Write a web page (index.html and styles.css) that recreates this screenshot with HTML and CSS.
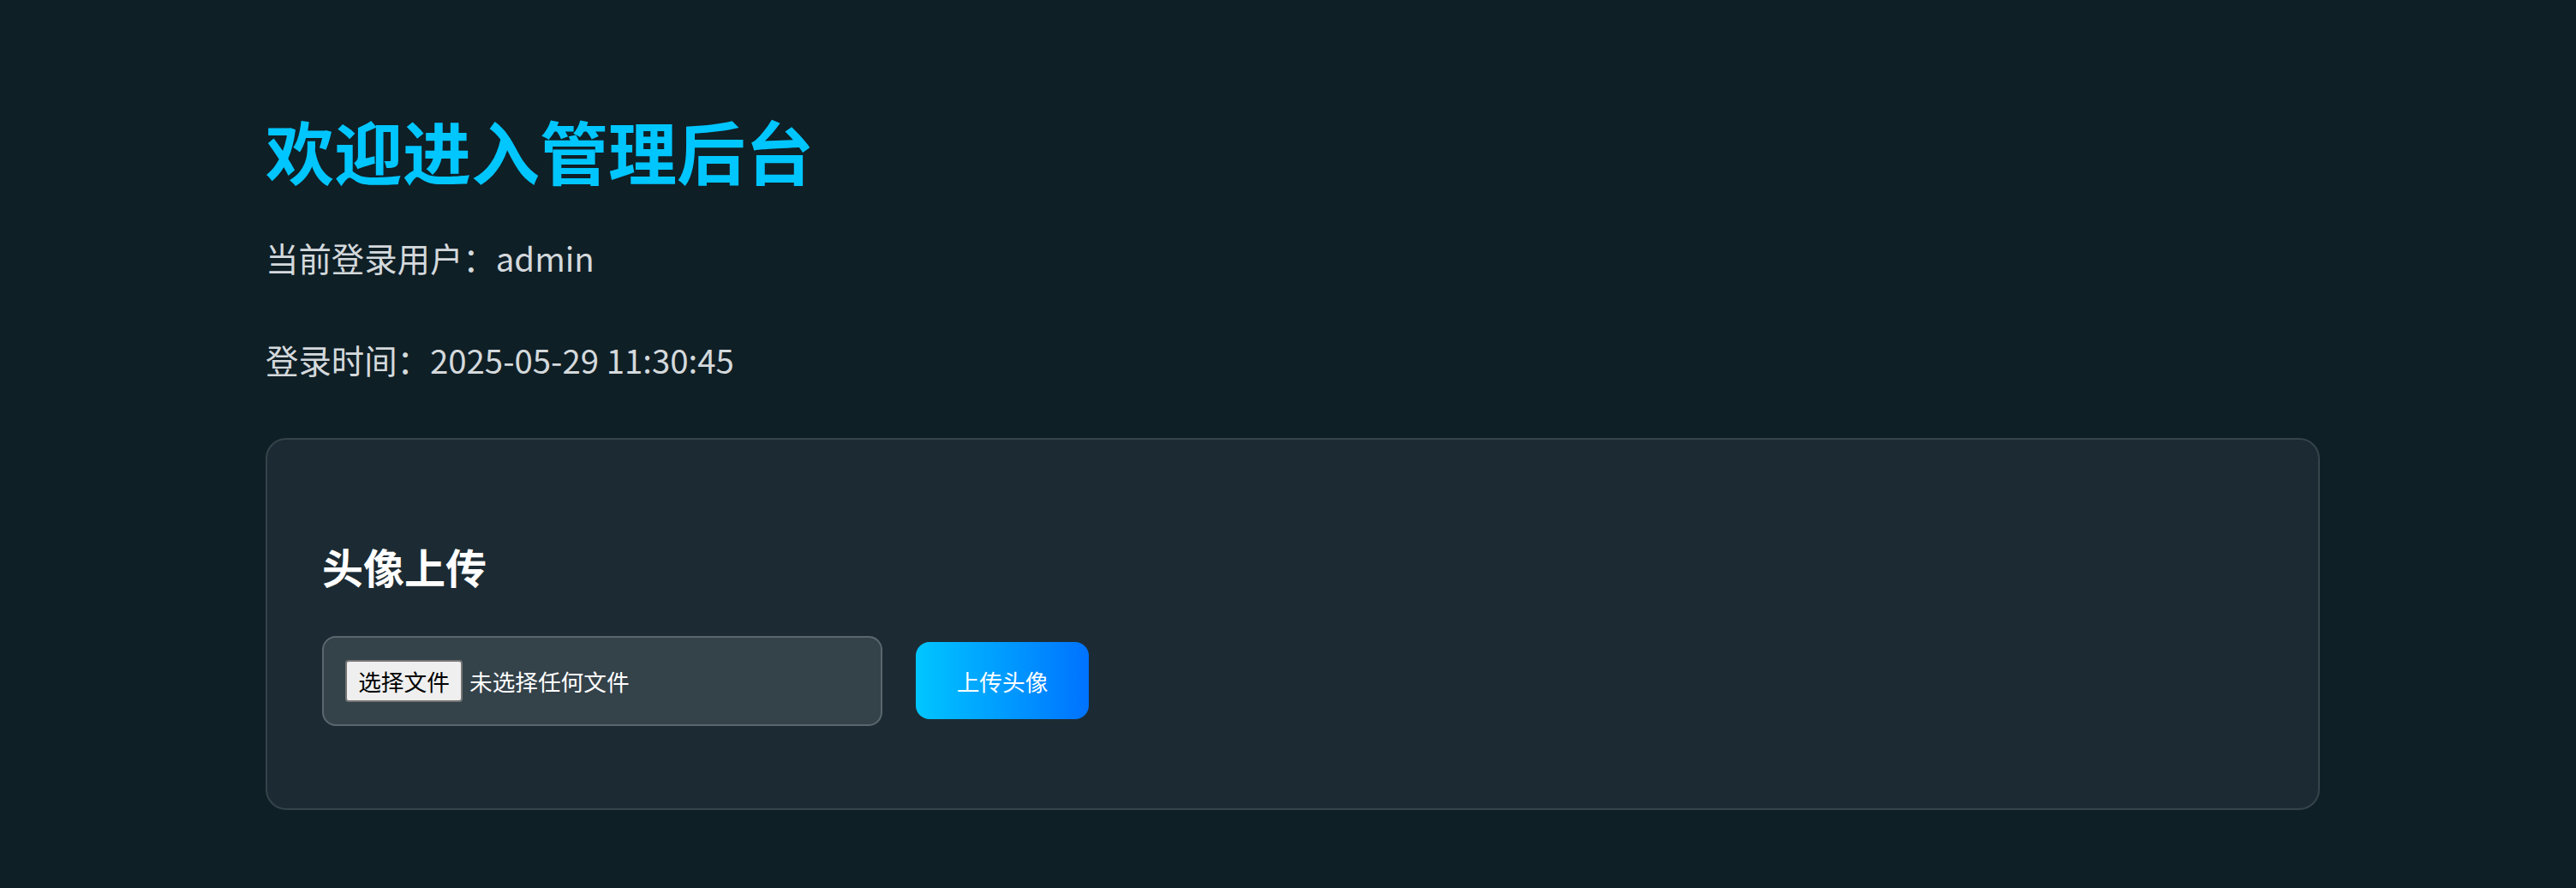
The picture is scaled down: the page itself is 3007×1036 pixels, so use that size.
FILE: index.html
```html
<!DOCTYPE html>
<html lang="zh-CN">
<head>
<meta charset="utf-8">
<title>管理后台</title>
<link rel="stylesheet" href="styles.css">
</head>
<body>
<main class="page">
  <h1 class="title">欢迎进入管理后台</h1>
  <p class="info info-user">当前登录用户：admin</p>
  <p class="info info-time">登录时间：2025-05-29 11:30:45</p>
  <section class="card">
    <h2 class="card-title">头像上传</h2>
    <form class="upload-row">
      <label class="file-box">
        <span class="file-btn">选择文件</span>
        <span class="file-name">未选择任何文件</span>
      </label>
      <button type="button" class="upload-btn">上传头像</button>
    </form>
  </section>
</main>
</body>
</html>
```

FILE: styles.css
```css
html, body {
  margin: 0;
  padding: 0;
  background: #0f1f26;
}

body {
  font-family: "Noto Sans CJK SC", "Noto Sans", sans-serif;
  color: #d4d9dc;
}

.page {
  width: 2398px;
  margin-left: 310px;
  padding-top: 117px;
  padding-bottom: 80px;
}

.title {
  margin: 0;
  font-size: 80px;
  line-height: 1.448;
  font-weight: 700;
  color: #00c6ff;
}

.info {
  margin: 0;
  font-size: 38.4px;
  line-height: 1.448;
  color: #d4d9dc;
}

.info-user {
  margin-top: 40px;
}

.info-time {
  margin-top: 64px;
}

.card {
  margin-top: 63px;
  background: #1c2b33;
  border: 2px solid #35434b;
  border-radius: 24px;
  padding: 64px 64px 96px 64px;
  box-sizing: border-box;
  height: 434px;
}

.card-title {
  margin: 49px 0 0 0;
  font-size: 48px;
  line-height: 1.448;
  font-weight: 700;
  color: #ffffff;
}

.upload-row {
  margin-top: 46px;
  display: flex;
  align-items: center;
  gap: 39px;
}

.file-box {
  box-sizing: border-box;
  width: 654px;
  height: 105px;
  background: #34424a;
  border: 2px solid #5b676e;
  border-radius: 16px;
  padding: 0 25px;
  display: flex;
  align-items: center;
}

.file-btn {
  box-sizing: border-box;
  width: 137px;
  height: 49px;
  background: #efefef;
  border: 2px solid #767676;
  border-radius: 4px;
  color: #000;
  font-size: 26.67px;
  display: flex;
  align-items: center;
  justify-content: center;
  margin-right: 8px;
}

.file-name {
  font-size: 26.67px;
  color: #ffffff;
}

.upload-btn {
  box-sizing: border-box;
  width: 202px;
  height: 90px;
  border: 0;
  border-radius: 16px;
  background: linear-gradient(90deg, #00c6ff, #0072ff);
  color: #ffffff;
  font-family: "Noto Sans CJK SC", "Noto Sans", sans-serif;
  font-size: 26.67px;
  padding: 0;
}
```
